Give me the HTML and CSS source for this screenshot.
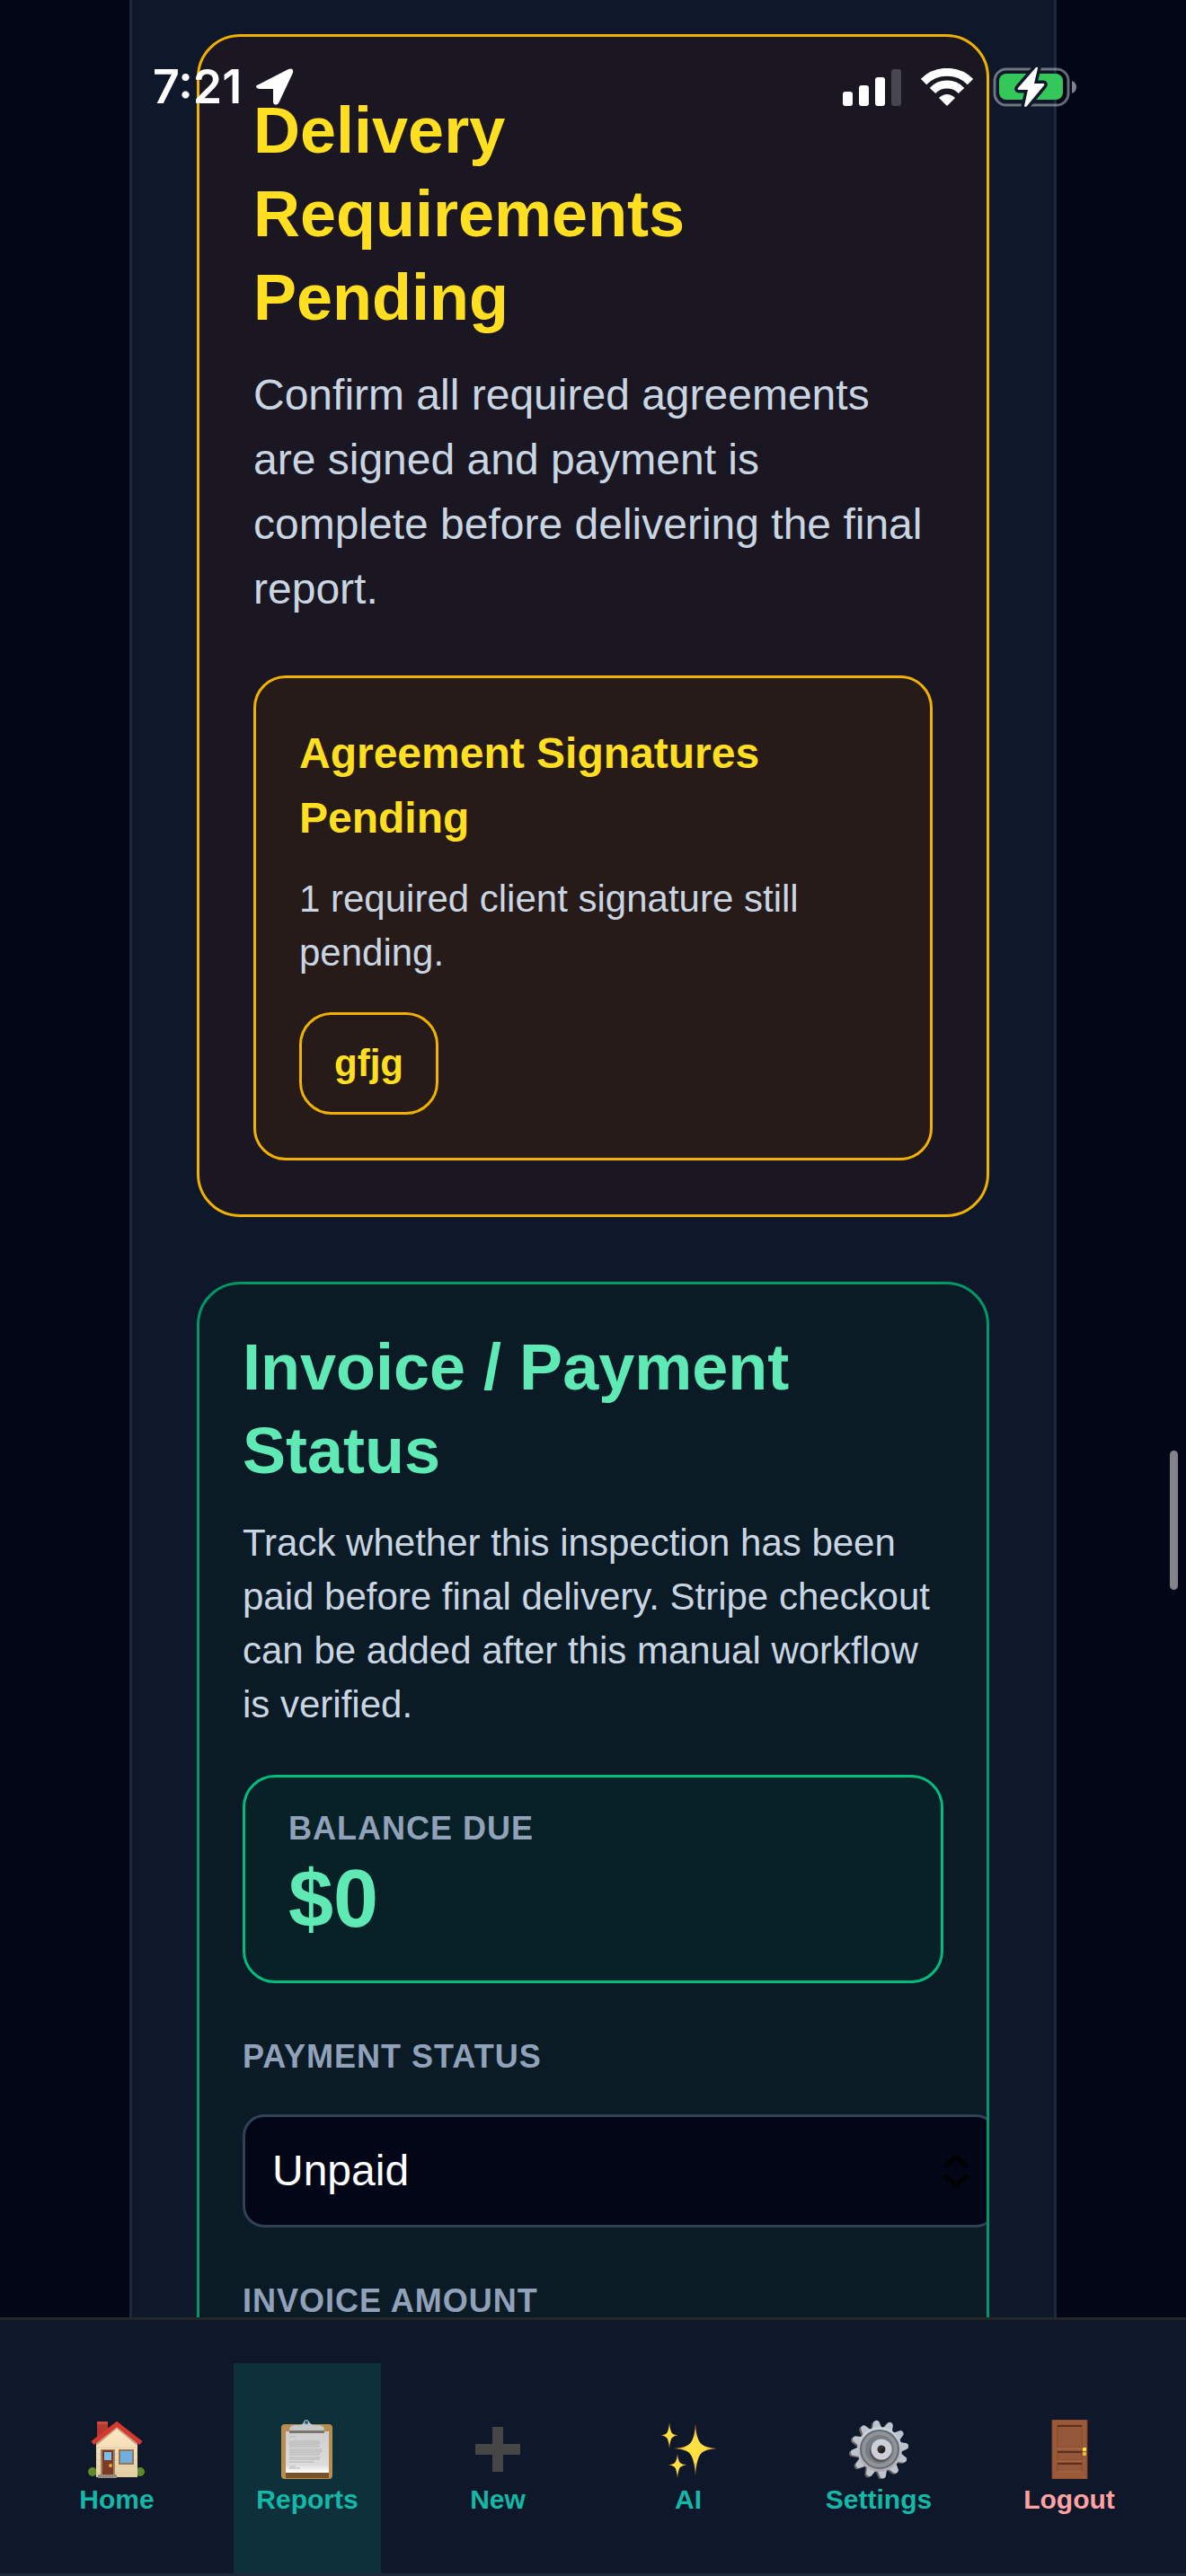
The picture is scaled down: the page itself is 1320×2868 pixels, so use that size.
FILE: index.html
```html
<!DOCTYPE html>
<html lang="en">
<head>
  <meta charset="UTF-8">
  <meta name="viewport" content="width=device-width, initial-scale=1">
  <title>Reports</title>
  <link rel="stylesheet" href="styles.css">
</head>
<body>
  <div class="status-bar">
    <div class="status-left">
      <span class="clock">7:21</span>
      <svg width="42" height="42" viewBox="0 0 42 42">
        <path d="M3 18 L36 1 Q42 -1 41 5 L26 37 Q24 42 20 40 Q19 39 19 37 L19 23 L5 23 Q0 23 0 20 Q0 19 3 18 Z" fill="#fff"/>
      </svg>
    </div>
    <div class="status-right">
      <svg width="65" height="42" viewBox="0 0 65 42" fill="#fff">
        <rect x="0" y="26" width="11" height="16" rx="3"/>
        <rect x="18" y="19" width="11" height="23" rx="3"/>
        <rect x="36" y="10" width="11" height="32" rx="3"/>
        <rect x="54" y="1" width="11" height="41" rx="3" opacity="0.2"/>
      </svg>
      <svg width="58" height="42" viewBox="0 0 58 42">
        <path d="M3 15 A37 37 0 0 1 55 15" fill="none" stroke="#fff" stroke-width="9"/>
        <path d="M13 25 A22 22 0 0 1 45 25" fill="none" stroke="#fff" stroke-width="9"/>
        <path d="M20 33 Q29 25 38 33 L30 41 Q29 42 28 41 Z" fill="#fff"/>
      </svg>
      <svg width="94" height="46" viewBox="0 0 94 46">
        <rect x="2" y="3" width="82" height="40" rx="13" fill="none" stroke="#fff" stroke-opacity="0.4" stroke-width="3"/>
        <path d="M88 16 Q93 18 93 23 Q93 28 88 30 Z" fill="#fff" fill-opacity="0.5"/>
        <rect x="7" y="8" width="71" height="29" rx="8" fill="#34c759"/>
        <path d="M48 1 L28 24 Q27 26 29 26 L39 26 L35 44 Q36 46 38 44 L57 21 Q58 19 56 19 L46 19 L50 2 Q50 0 48 1 Z" fill="#fff" stroke="#10182b" stroke-width="7" stroke-linejoin="round" paint-order="stroke"/>
      </svg>
    </div>
  </div>

  <main class="panel">
    <section class="card card-pending">
      <h2>Delivery Requirements Pending</h2>
      <p class="lead">Confirm all required agreements are signed and payment is complete before delivering the final report.</p>
      <div class="notice">
        <h3>Agreement Signatures Pending</h3>
        <p>1 required client signature still pending.</p>
        <span class="pill">gfjg</span>
      </div>
    </section>

    <section class="card card-invoice">
      <h2>Invoice / Payment Status</h2>
      <p>Track whether this inspection has been paid before final delivery. Stripe checkout can be added after this manual workflow is verified.</p>
      <div class="balance">
        <div class="label">Balance Due</div>
        <div class="amount">$0</div>
      </div>
      <form class="fields">
        <div class="field">
          <label class="label" for="paymentStatus">Payment Status</label>
          <div class="select-wrap">
            <select id="paymentStatus">
              <option>Unpaid</option>
            </select>
            <svg class="chevrons" width="28" height="38" viewBox="0 0 28 38" fill="none" stroke="#000" stroke-width="5" stroke-linecap="round" stroke-linejoin="round">
              <path d="M3 13 L14 3 L25 13"/>
              <path d="M3 25 L14 35 L25 25"/>
            </svg>
          </div>
        </div>
        <div class="field">
          <label class="label" for="invoiceAmount">Invoice Amount</label>
          <input type="text" id="invoiceAmount">
        </div>
      </form>
    </section>
  </main>

  <div class="scroll-thumb"></div>

  <nav class="bottom-nav">
    <a href="#home">
      <svg class="icon" viewBox="0 0 66 66">
        <defs>
          <linearGradient id="wall" x1="0" y1="0" x2="0" y2="1">
            <stop offset="0" stop-color="#ffe9c4"/>
            <stop offset="1" stop-color="#e3cfa6"/>
          </linearGradient>
        </defs>
        <rect x="11" y="2" width="12" height="18" fill="#b23a30"/>
        <rect x="11" y="2" width="12" height="3" fill="#cf4a3c"/>
        <circle cx="6" cy="58" r="5" fill="#5f8a2c"/>
        <circle cx="59" cy="58" r="5" fill="#5f8a2c"/>
        <path d="M10 26 L33 7 L56 26 L56 64 L10 64 Z" fill="url(#wall)"/>
        <path d="M11 31 H55 M11 38 H55 M11 45 H55 M11 52 H55 M11 59 H55" stroke="#d8c094" stroke-width="1" opacity="0.5"/>
        <path d="M10 27 L33 8 L56 27" fill="none" stroke="#8c5a45" stroke-width="3" opacity="0.5"/>
        <path d="M6 26 L33 5 L60 26" fill="none" stroke="#d8392f" stroke-width="5"/>
        <rect x="15" y="33" width="16" height="29" fill="#a08468"/>
        <rect x="17" y="34" width="12" height="27" fill="#7a3a24"/>
        <rect x="19" y="36" width="8" height="9" fill="#7dbfea"/>
        <circle cx="26" cy="51" r="2" fill="#e5a93a"/>
        <rect x="12" y="61" width="21" height="4" rx="1" fill="#938b80"/>
        <rect x="35" y="33" width="17" height="17" fill="#93755a"/>
        <rect x="37" y="35" width="13" height="13" fill="#6eaee0"/>
      </svg>
      <span>Home</span>
    </a>
    <a href="#reports" class="active">
      <svg class="icon" viewBox="0 0 66 66">
        <defs>
          <linearGradient id="paper" x1="0" y1="0" x2="0" y2="1">
            <stop offset="0" stop-color="#cfcfcf"/>
            <stop offset="0.8" stop-color="#dcdcdc"/>
            <stop offset="1" stop-color="#ffffff"/>
          </linearGradient>
        </defs>
        <rect x="4" y="5" width="57" height="61" rx="4" fill="#b98c50"/>
        <rect x="9" y="58" width="48" height="7" fill="#7b532a"/>
        <rect x="9" y="13" width="48" height="46" fill="url(#paper)"/>
        <path d="M13 19 H20 M13 24 H47 M13 26 H48 M13 28 H46 M13 30 H47 M13 33 H49 M13 35 H50 M13 37 H48 M13 39 H47 M13 42 H48 M13 44 H47 M13 47 H40 M13 52 H20 M13 54 H25" stroke="#b4b4b4" stroke-width="1"/>
        <rect x="13" y="12" width="39" height="3" fill="#7d746c"/>
        <path d="M13 12 Q13 6 19 6 L46 6 Q52 6 52 12 Z" fill="#c5c7c9"/>
        <path d="M24 6 Q29 5 29 2 Q32 -2 35 2 Q36 5 41 6 Z" fill="#b7c8d4"/>
        <circle cx="32" cy="3" r="2" fill="#35566a"/>
      </svg>
      <span>Reports</span>
    </a>
    <a href="#new">
      <svg class="icon" viewBox="0 0 66 66">
        <path d="M27 8 H39 V27 H58 V39 H39 V58 H27 V39 H8 V27 H27 Z" fill="#464646"/>
      </svg>
      <span>New</span>
    </a>
    <a href="#ai">
      <svg class="icon" viewBox="0 0 66 66">
        <defs>
          <radialGradient id="spark">
            <stop offset="0" stop-color="#ffe23c"/>
            <stop offset="0.45" stop-color="#ffdc46"/>
            <stop offset="1" stop-color="#d27c2c"/>
          </radialGradient>
        </defs>
        <g fill="url(#spark)">
          <path d="M41 4 Q42 24 49 28 Q53 31 65 32 Q53 33 49 36 Q42 41 41 63 Q40 41 33 36 Q29 33 17 32 Q29 31 33 28 Q40 24 41 4 Z"/>
          <path d="M12 3 Q13 13 15 15 Q17 17 22 17 Q17 18 15 20 Q13 22 12 32 Q11 22 9 20 Q7 18 2 17 Q7 17 9 15 Q11 13 12 3 Z"/>
          <path d="M21 38 Q22 46 24 48 Q26 50 32 50 Q26 51 24 53 Q22 55 21 65 Q20 55 18 53 Q16 51 10 50 Q16 50 18 48 Q20 46 21 38 Z"/>
        </g>
      </svg>
      <span>AI</span>
    </a>
    <a href="#settings">
      <svg class="icon" viewBox="0 0 66 66">
        <defs>
          <linearGradient id="steel" x1="0" y1="0" x2="0" y2="1">
            <stop offset="0" stop-color="#c8d6df"/>
            <stop offset="1" stop-color="#b0a9b3"/>
          </linearGradient>
          <g id="teeth">
            <path id="tooth" d="M28 12 L31 2 Q34 -1 37 2 L40 12 Z"/>
            <use href="#tooth" transform="rotate(30 34 33)"/>
            <use href="#tooth" transform="rotate(60 34 33)"/>
            <use href="#tooth" transform="rotate(90 34 33)"/>
            <use href="#tooth" transform="rotate(120 34 33)"/>
            <use href="#tooth" transform="rotate(150 34 33)"/>
            <use href="#tooth" transform="rotate(180 34 33)"/>
            <use href="#tooth" transform="rotate(210 34 33)"/>
            <use href="#tooth" transform="rotate(240 34 33)"/>
            <use href="#tooth" transform="rotate(270 34 33)"/>
            <use href="#tooth" transform="rotate(300 34 33)"/>
            <use href="#tooth" transform="rotate(330 34 33)"/>
          </g>
        </defs>
        <g transform="rotate(-7 34 33)">
          <use href="#teeth" x="-2" y="1" fill="#66605f"/>
          <use href="#teeth" fill="#bcc5ce"/>
        </g>
        <circle cx="34" cy="33" r="25" fill="url(#steel)"/>
        <circle cx="34" cy="33" r="21" fill="#8e9499" stroke="#646a70" stroke-width="2"/>
        <circle cx="34" cy="33" r="16" fill="#777d82"/>
        <circle cx="35" cy="35" r="12" fill="#565155"/>
        <circle cx="36" cy="33" r="8" fill="#3b2f2a" stroke="#cdd0d8" stroke-width="7"/>
        <path d="M33 36 A4 4 0 0 0 39 36 L40 30 Z" fill="#1b2333"/>
      </svg>
      <span>Settings</span>
    </a>
    <a href="#logout" class="logout">
      <svg class="icon" viewBox="0 0 66 66">
        <rect x="14" y="0" width="39" height="66" fill="#9a5a3a"/>
        <path d="M14 0 H53 V66 H14 Z" fill="none" stroke="#7e452a" stroke-width="1"/>
        <g fill="#96583a" stroke="#804a2f" stroke-width="1">
          <rect x="20" y="6" width="27" height="25"/>
          <rect x="20" y="35" width="27" height="10"/>
          <rect x="20" y="48" width="27" height="10"/>
        </g>
        <path d="M20 7 H47 M20 36 H47 M20 49 H47" stroke="#5a2f1c" stroke-width="2"/>
        <path d="M20 32 H47 M20 46 H47 M20 58 H47" stroke="#b56f4b" stroke-width="1"/>
        <rect x="48" y="31" width="4" height="4" rx="1" fill="#ffe44a"/>
        <rect x="48" y="36" width="4" height="4" rx="1" fill="#e8bd32"/>
      </svg>
      <span>Logout</span>
    </a>
  </nav>
</body>
</html>
```
FILE: styles.css
```css
body {
  font-family: "Liberation Sans", Arial, sans-serif;
  background-color: #020617;
  color: #cad5e2;
  margin: 0;
  height: 100vh;
  overflow: hidden;
}

h2, h3, p {
  margin: 0;
}

/* status bar */
.status-bar {
  position: fixed;
  top: 73px;
  left: 0;
  right: 0;
  z-index: 5;
  display: flex;
  justify-content: space-between;
  align-items: center;
  height: 48px;
  padding: 0 121px 0 170px;
  box-sizing: border-box;
}

.status-left, .status-right {
  display: flex;
  align-items: center;
}

.status-left {
  gap: 16px;
}

.status-right {
  gap: 22px;
}

.clock {
  font-family: Inter, sans-serif;
  font-size: 52px;
  font-weight: 600;
  line-height: 48px;
  color: #fff;
}

/* content panel */
.panel {
  margin: 0 144px;
  padding: 38px 72px 72px;
  min-height: 100vh;
  box-sizing: border-box;
  background-color: #0f172a;
  border-left: 3px solid #1e293b;
  border-right: 3px solid #1e293b;
}

.card {
  border: 3px solid;
  border-radius: 48px;
  margin-bottom: 72px;
  overflow: hidden;
}

.card h2 {
  font-size: 72px;
  line-height: 93px;
  margin-bottom: 26px;
}

.card p {
  font-size: 42px;
  line-height: 60px;
}

.card-pending {
  padding: 58px 60px 60px;
  background-color: #1a1722;
  border-color: #f0b100;
}

.card-pending h2, .card-pending h3 {
  color: #ffdf20;
}

.card-pending .lead {
  font-size: 48px;
  line-height: 72px;
  margin-bottom: 60px;
}

.notice {
  padding: 48px;
  border: 3px solid #f0b100;
  border-radius: 36px;
  background-color: #271b19;
}

.notice h3 {
  font-size: 48px;
  line-height: 72px;
  margin-bottom: 24px;
}

.notice p {
  margin-bottom: 36px;
}

.pill {
  display: block;
  width: fit-content;
  padding: 24px 36px;
  border: 3px solid #f0b100;
  border-radius: 36px;
  color: #ffdf20;
  font-size: 42px;
  font-weight: bold;
  line-height: 60px;
}

.card-invoice {
  padding: 46px 48px 48px;
  background-color: #0b1b26;
  border-color: #009966;
}

.card-invoice h2 {
  color: #5ee9b5;
}

.label {
  font-size: 36px;
  font-weight: bold;
  line-height: 44px;
  letter-spacing: 1px;
  text-transform: uppercase;
  color: #90a1b9;
}

.balance {
  margin: 48px 0 60px;
  padding: 35px 48px;
  border: 3px solid #00bc7d;
  border-radius: 36px;
  background-color: #072126;
}

.amount {
  color: #5ee9b5;
  font-size: 90px;
  font-weight: bold;
  line-height: 112px;
}

.fields {
  display: flex;
  flex-direction: column;
  gap: 60px;
}

.field {
  display: flex;
  flex-direction: column;
  gap: 42px;
}

.select-wrap {
  position: relative;
}

/* full width plus padding, runs past the card edge */
select, input {
  appearance: none;
  box-sizing: content-box;
  width: 100%;
  height: 60px;
  padding: 30px 24px 30px 30px;
  border: 3px solid #314158;
  border-radius: 24px;
  background-color: #020617;
  color: #fff;
  font-family: inherit;
  font-size: 48px;
  line-height: 60px;
}

.chevrons {
  position: absolute;
  top: 44px;
  right: -28px;
  pointer-events: none;
}

.scroll-thumb {
  position: fixed;
  top: 1615px;
  right: 9px;
  width: 9px;
  height: 155px;
  border-radius: 5px;
  background-color: #838389;
}

/* bottom navigation */
.bottom-nav {
  position: fixed;
  left: 0;
  right: 0;
  bottom: 0;
  z-index: 4;
  display: grid;
  grid-template-columns: repeat(6, 1fr);
  gap: 48px;
  padding: 48px 48px 0;
  background-color: #0f172a;
  border-top: 3px solid #262626;
  border-bottom: 3px solid #1e293b;
}

.bottom-nav a {
  display: flex;
  flex-direction: column;
  align-items: center;
  gap: 6px;
  padding: 63px 0 65px;
  color: #14b8a6;
  font-size: 30px;
  font-weight: bold;
  line-height: 34px;
  text-decoration: none;
}

.bottom-nav a.active {
  background-color: #0d303b;
}

.bottom-nav a.logout {
  color: #ffa2a2;
}

.icon {
  width: 66px;
  height: 66px;
}
```
